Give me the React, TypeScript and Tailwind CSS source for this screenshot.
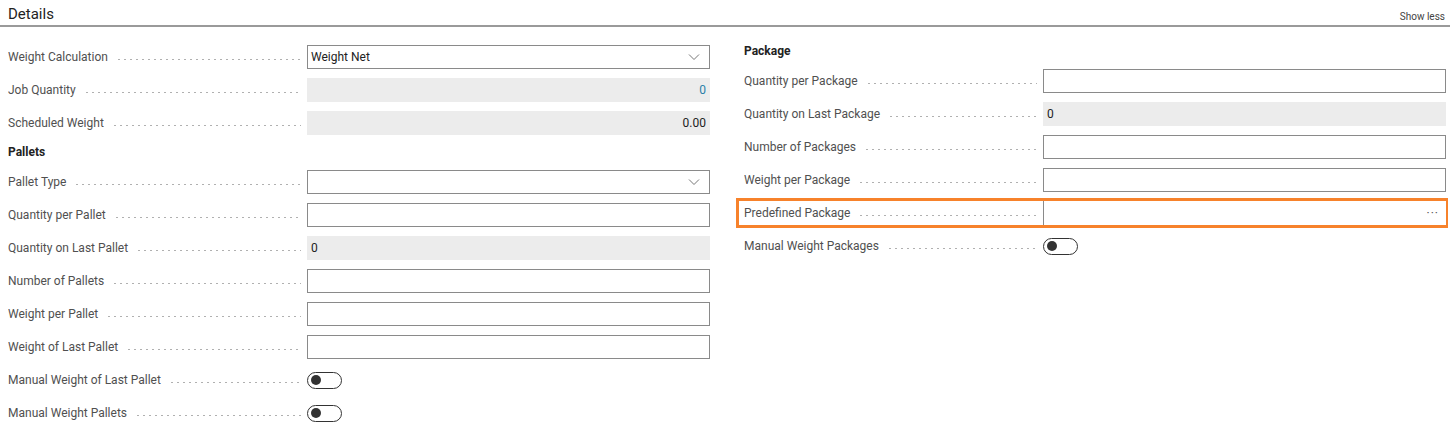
import React from "react";

const Chevron = () => (
  <svg width="12" height="8" viewBox="0 0 12 8" className="ml-auto mr-[6px]"><path d="M1 1.5l5 5 5-5" fill="none" stroke="#777" strokeWidth="1" /></svg>
);

type F = { label: string; kind: "select" | "input" | "ro" | "toggle" | "dots"; value?: string; align?: "r"; blue?: boolean; hl?: boolean };

const Label = ({ t }: { t: string }) => (
  <div className="flex items-center w-[299px] pr-[6px] shrink-0 overflow-hidden">
    <span className="whitespace-nowrap text-[#505050]">{t}</span>
    <span className="flex-1 ml-[8px] h-[3px] translate-y-[2px] bg-[radial-gradient(circle,#b0b0b0_0.7px,transparent_1.1px)] bg-[length:6px_3px] bg-repeat-x" />
  </div>
);

const Field = ({ f }: { f: F }) => {
  let ctl: React.ReactNode;
  if (f.kind === "toggle")
    ctl = (
      <div className="w-[35px] h-[17px] rounded-full border border-[#333] flex items-center px-[3px]">
        <div className="w-[10px] h-[10px] rounded-full bg-[#333]" />
      </div>
    );
  else if (f.kind === "ro")
    ctl = (
      <div className={`w-[403px] h-[24px] bg-[#ececec] flex items-center px-[4px] ${f.align ? "justify-end" : ""} ${f.blue ? "text-[#2a7fa8]" : "text-[#222]"}`}>{f.value}</div>
    );
  else
    ctl = (
      <div className={`w-[403px] h-[24px] bg-white border ${f.hl ? "border-[#8a8a8a] border-y-0 border-r-0" : "border-[#8a8a8a]"} flex items-center px-[3px] text-[#222]`}>
        {f.value}
        {f.kind === "select" && <Chevron />}
        {f.kind === "dots" && <span className="ml-auto mr-[4px] text-[#555] tracking-[1px]">···</span>}
      </div>
    );
  const row = (
    <div className="flex items-center h-[24px] shrink-0">
      <Label t={f.label} />
      {ctl}
    </div>
  );
  if (f.hl)
    return (
      <div className="-ml-[8px] -my-[3px] w-[712px] border-[3px] border-[#f7822b] pl-[5px] h-[30px] flex items-center shrink-0">{row}</div>
    );
  return row;
};

const left1: F[] = [
  { label: "Weight Calculation", kind: "select", value: "Weight Net" },
  { label: "Job Quantity", kind: "ro", value: "0", align: "r", blue: true },
  { label: "Scheduled Weight", kind: "ro", value: "0.00", align: "r" },
];
const left2: F[] = [
  { label: "Pallet Type", kind: "select" },
  { label: "Quantity per Pallet", kind: "input" },
  { label: "Quantity on Last Pallet", kind: "ro", value: "0" },
  { label: "Number of Pallets", kind: "input" },
  { label: "Weight per Pallet", kind: "input" },
  { label: "Weight of Last Pallet", kind: "input" },
  { label: "Manual Weight of Last Pallet", kind: "toggle" },
  { label: "Manual Weight Pallets", kind: "toggle" },
];
const right: F[] = [
  { label: "Quantity per Package", kind: "input" },
  { label: "Quantity on Last Package", kind: "ro", value: "0" },
  { label: "Number of Packages", kind: "input" },
  { label: "Weight per Package", kind: "input" },
  { label: "Predefined Package", kind: "dots", hl: true },
  { label: "Manual Weight Packages", kind: "toggle" },
];

export default function App() {
  return (
    <div className="w-[1450px] h-[439px] bg-white text-[12px] overflow-hidden" style={{ fontFamily: "Roboto, 'Noto Sans', sans-serif" }}>
      <div className="flex items-end justify-between h-[27px] border-b-2 border-[#9a9a9a] pl-[8px] pr-[5px] pb-[3px]">
        <span className="text-[15px] text-[#222] leading-none">Details</span>
        <span className="text-[10px] text-[#444] leading-none">Show less</span>
      </div>
      <div className="flex pl-[8px] pt-[18px]">
        <div className="flex flex-col gap-[9px] w-[702px] shrink-0">
          {left1.map((f) => <Field key={f.label} f={f} />)}
          <div className="font-bold text-[#222] h-[17px] flex items-end">Pallets</div>
          {left2.map((f) => <Field key={f.label} f={f} />)}
        </div>
        <div className="flex flex-col gap-[9px] ml-[34px] mt-[1px] w-[702px] shrink-0">
          <div className="font-bold text-[#222] h-[14px] flex items-end">Package</div>
          {right.map((f) => <Field key={f.label} f={f} />)}
        </div>
      </div>
    </div>
  );
}
